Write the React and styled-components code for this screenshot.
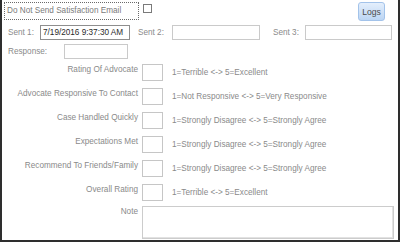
import styled, { createGlobalStyle } from 'styled-components'

const GlobalStyle = createGlobalStyle`
  body {
    margin: 0;
    background: #fff;
    font-family: "Liberation Sans", Arial, sans-serif;
  }
`

const Frame = styled.div`
  width: 400px;
  height: 242px;
  box-sizing: border-box;
  border: 2px solid #2e2e2e;
  border-top: none;
  background: #fff;
  font-size: 8.2px;
  color: #8a8a8a;
  overflow: hidden;
`

const TopRow = styled.div`
  display: flex;
  align-items: flex-start;
  padding: 2px 0 0 2px;
  height: 21px;
`

const OptOut = styled.div`
  width: 135px;
  height: 18px;
  box-sizing: border-box;
  border: 1px dotted #6a6a6a;
  padding-left: 2px;
  line-height: 16px;
  color: #7a7a7a;
`

const CheckBox = styled.div`
  width: 9px;
  height: 9px;
  box-sizing: border-box;
  margin: 2px 0 0 4px;
  border: 1px solid #7a7a7a;
  background: #fff;
`

const LogsButton = styled.button`
  margin: 0 13px 0 auto;
  width: 27px;
  height: 19px;
  padding: 0;
  border: 1px solid #a3c3ea;
  border-radius: 3px;
  background: linear-gradient(#e4effc, #bcd5f3);
  color: #4a4a4a;
  font-family: inherit;
  font-size: 8.6px;
`

const FieldRow = styled.div`
  display: flex;
  align-items: center;
  height: 15px;
  margin-top: ${({ $top }) => $top}px;
  padding-left: 6px;
`

const FieldLabel = styled.span`
  width: ${({ $w }) => $w}px;
  margin-left: ${({ $gap }) => $gap || 0}px;
  flex-shrink: 0;
`

const TextBox = styled.input`
  width: ${({ $w }) => $w}px;
  height: 15px;
  box-sizing: border-box;
  padding: 0 2px;
  border: 1px solid ${({ $filled }) => ($filled ? '#8e8e8e' : '#cacaca')};
  font-family: inherit;
  font-size: 8.2px;
  color: #2a2a2a;
  outline: none;
`

const RatingList = styled.div`
  display: flex;
  flex-direction: column;
  gap: 7px;
  margin-top: 5px;
`

const RatingRow = styled.div`
  display: flex;
  align-items: flex-start;
  margin-top: ${({ $top }) => $top || 0}px;
`

const RatingLabel = styled.div`
  width: 136px;
  text-align: right;
  line-height: 12px;
  white-space: nowrap;
`

const ScoreBox = styled.input`
  width: 21px;
  height: 17px;
  box-sizing: border-box;
  margin: 0 0 0 4px;
  border: 1px solid #c6c6c6;
  outline: none;
`

const Scale = styled.div`
  margin-left: 9px;
  line-height: 17px;
  white-space: nowrap;
`

const NoteArea = styled.textarea`
  width: 252px;
  height: 33px;
  box-sizing: border-box;
  margin: 0 0 0 4px;
  border: 1px solid #cccccc;
  box-shadow: inset -1px -1px 0 #e2e2e2;
  resize: none;
  outline: none;
`

const ratings = [
  ['Rating Of Advocate', '1=Terrible <-> 5=Excellent'],
  ['Advocate Responsive To Contact', '1=Not Responsive <-> 5=Very Responsive'],
  ['Case Handled Quickly', '1=Strongly Disagree <-> 5=Strongly Agree'],
  ['Expectations Met', '1=Strongly Disagree <-> 5=Strongly Agree'],
  ['Recommend To Friends/Family', '1=Strongly Disagree <-> 5=Strongly Agree'],
  ['Overall Rating', '1=Terrible <-> 5=Excellent'],
]

export default function App() {
  return (
    <>
      <GlobalStyle />
      <Frame>
        <TopRow>
          <OptOut>Do Not Send Satisfaction Email</OptOut>
          <CheckBox />
          <LogsButton>Logs</LogsButton>
        </TopRow>

        <FieldRow $top={2}>
          <FieldLabel $w={32}>Sent 1:</FieldLabel>
          <TextBox $w={90} $filled readOnly defaultValue="7/19/2016 9:37:30 AM" />
          <FieldLabel $w={34} $gap={8}>Sent 2:</FieldLabel>
          <TextBox $w={88} readOnly />
          <FieldLabel $w={32} $gap={13}>Sent 3:</FieldLabel>
          <TextBox $w={87} readOnly />
        </FieldRow>

        <FieldRow $top={4}>
          <FieldLabel $w={56}>Response:</FieldLabel>
          <TextBox $w={64} readOnly />
        </FieldRow>

        <RatingList>
          {ratings.map(([label, scale]) => (
            <RatingRow key={label}>
              <RatingLabel>{label}</RatingLabel>
              <ScoreBox readOnly />
              <Scale>{scale}</Scale>
            </RatingRow>
          ))}
        </RatingList>

        <RatingRow $top={5}>
          <RatingLabel>Note</RatingLabel>
          <NoteArea readOnly />
        </RatingRow>
      </Frame>
    </>
  )
}
